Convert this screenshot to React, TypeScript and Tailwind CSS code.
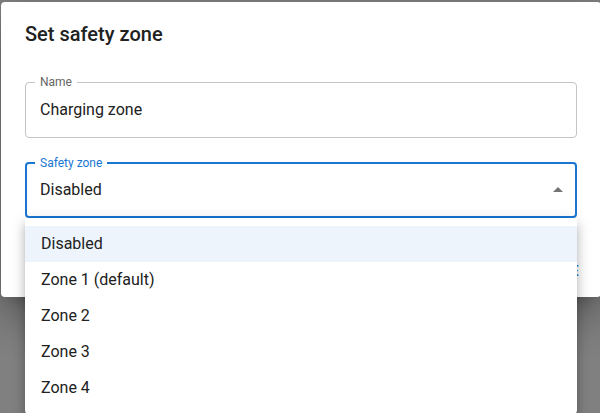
const zones = ["Disabled", "Zone 1 (default)", "Zone 2", "Zone 3", "Zone 4"];

function OutlinedField({
  label,
  value,
  focused,
  children,
}: {
  label: string;
  value: string;
  focused?: boolean;
  children?: React.ReactNode;
}) {
  return (
    <div
      className={
        focused
          ? "relative flex h-14 items-center rounded border-2 border-[#1976d2] px-[13px]"
          : "relative flex h-14 items-center rounded border border-[#c4c4c4] px-[14px]"
      }
    >
      <span
        className={
          focused
            ? "absolute -top-[9px] left-[8px] bg-white px-[5px] text-[12px] leading-4 text-[#1976d2]"
            : "absolute -top-[9px] left-[9px] bg-white px-[5px] text-[12px] leading-4 text-[#666666]"
        }
      >
        {label}
      </span>
      <span className="flex-1 text-[16px] leading-6 text-[#212121]">{value}</span>
      {children}
    </div>
  );
}

export default function App() {
  return (
    <div
      className="relative h-[413px] w-[600px] overflow-hidden bg-[#808080]"
      style={{ fontFamily: "Roboto, 'Liberation Sans', sans-serif" }}
    >
      <div className="ml-px mt-[2px] flex h-[295px] w-[600px] flex-col rounded bg-white shadow-[0_11px_15px_-7px_rgba(0,0,0,0.2),0_24px_38px_3px_rgba(0,0,0,0.14),0_9px_46px_8px_rgba(0,0,0,0.12)]">
        <h2 className="px-6 py-4 text-[20px] font-medium leading-8 text-[#212121]">
          Set safety zone
        </h2>
        <div className="flex flex-col px-6 pt-4">
          <OutlinedField label="Name" value="Charging zone" />
          <div className="mt-6">
            <OutlinedField label="Safety zone" value="Disabled" focused>
              <svg viewBox="0 0 24 24" className="mr-[-8px] h-6 w-6 fill-[#757575]">
                <path d="M7 14l5-5 5 5z" />
              </svg>
            </OutlinedField>
          </div>
        </div>
        <div className="mt-auto flex justify-end gap-2 pb-2 pr-[14px]">
          <button className="rounded px-2 py-1.5 text-[14px] font-medium uppercase leading-6 tracking-[0.4px] text-[#1976d2]">
            Cancel
          </button>
          <button className="rounded px-2 py-1.5 text-[14px] font-medium uppercase leading-6 tracking-[0.4px] text-[#1976d2]">
            Save
          </button>
        </div>
      </div>

      <ul className="absolute left-[25px] top-[218px] w-[552px] rounded bg-white py-2 shadow-[0_5px_5px_-3px_rgba(0,0,0,0.2),0_8px_10px_1px_rgba(0,0,0,0.14),0_3px_14px_2px_rgba(0,0,0,0.12)]">
        {zones.map((z, i) => (
          <li
            key={z}
            className={
              i === 0
                ? "bg-[#edf4fb] px-4 py-1.5 text-[16px] leading-6 text-[#212121]"
                : "px-4 py-1.5 text-[16px] leading-6 text-[#212121]"
            }
          >
            {z}
          </li>
        ))}
      </ul>
    </div>
  );
}
